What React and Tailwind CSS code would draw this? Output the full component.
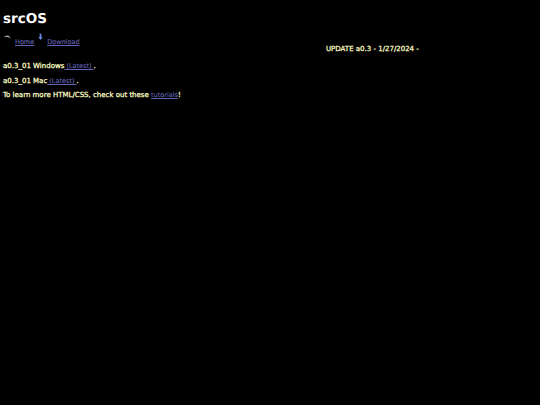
const linkClass = 'text-[#6363b4] text-[6.5px] underline [-webkit-text-stroke:0.1px_#6363b4]';

export default function App() {
  return (
    <div className="min-h-screen bg-black pl-[3px] text-[#ffffc8] font-['DejaVu_Sans',sans-serif] text-[7px] leading-[10px] [text-rendering:geometricPrecision] [-webkit-text-stroke:0.25px_#ffffc8]">
      <h1 className="pt-[11px] text-[13.5px] leading-[16px] font-bold text-white [-webkit-text-stroke:0px]">srcOS</h1>

      <div className="mt-[8px] flex items-start h-[12px]">
        <svg width="9" height="7" viewBox="0 0 9 7" className="mt-[-1px]">
          <path d="M1 3.5 C2 1.5 4.5 1 6 2 L8 4.5 L6.5 3.8 C5 2.8 3 3 1 3.5Z" fill="#9a9a9a" />
        </svg>
        <a className={`${linkClass} ml-[3px] mt-[2px]`}>Home</a>
        <svg width="5" height="8" viewBox="0 0 6 9" className="ml-[4px] mt-[-2px]">
          <path d="M2 0.5H4V4.5H5.5L3 8L0.5 4.5H2Z" fill="#6a8ae8" />
        </svg>
        <a className={`${linkClass} ml-[4px] mt-[2px]`}>Download</a>
      </div>

      <div className="ml-[323px] mt-[-3px]">UPDATE a0.3 - 1/27/2024 -</div>

      <p className="mt-[7px]">
        a0.3_01 Windows<a className={linkClass}> (Latest) </a>.
      </p>
      <p className="mt-[5px]">
        a0.3_01 Mac<a className={linkClass}> (Latest) </a>.
      </p>
      <p className="mt-[4px]">
        To learn more HTML/CSS, check out these <a className={linkClass}>tutorials</a>!
      </p>
    </div>
  );
}
